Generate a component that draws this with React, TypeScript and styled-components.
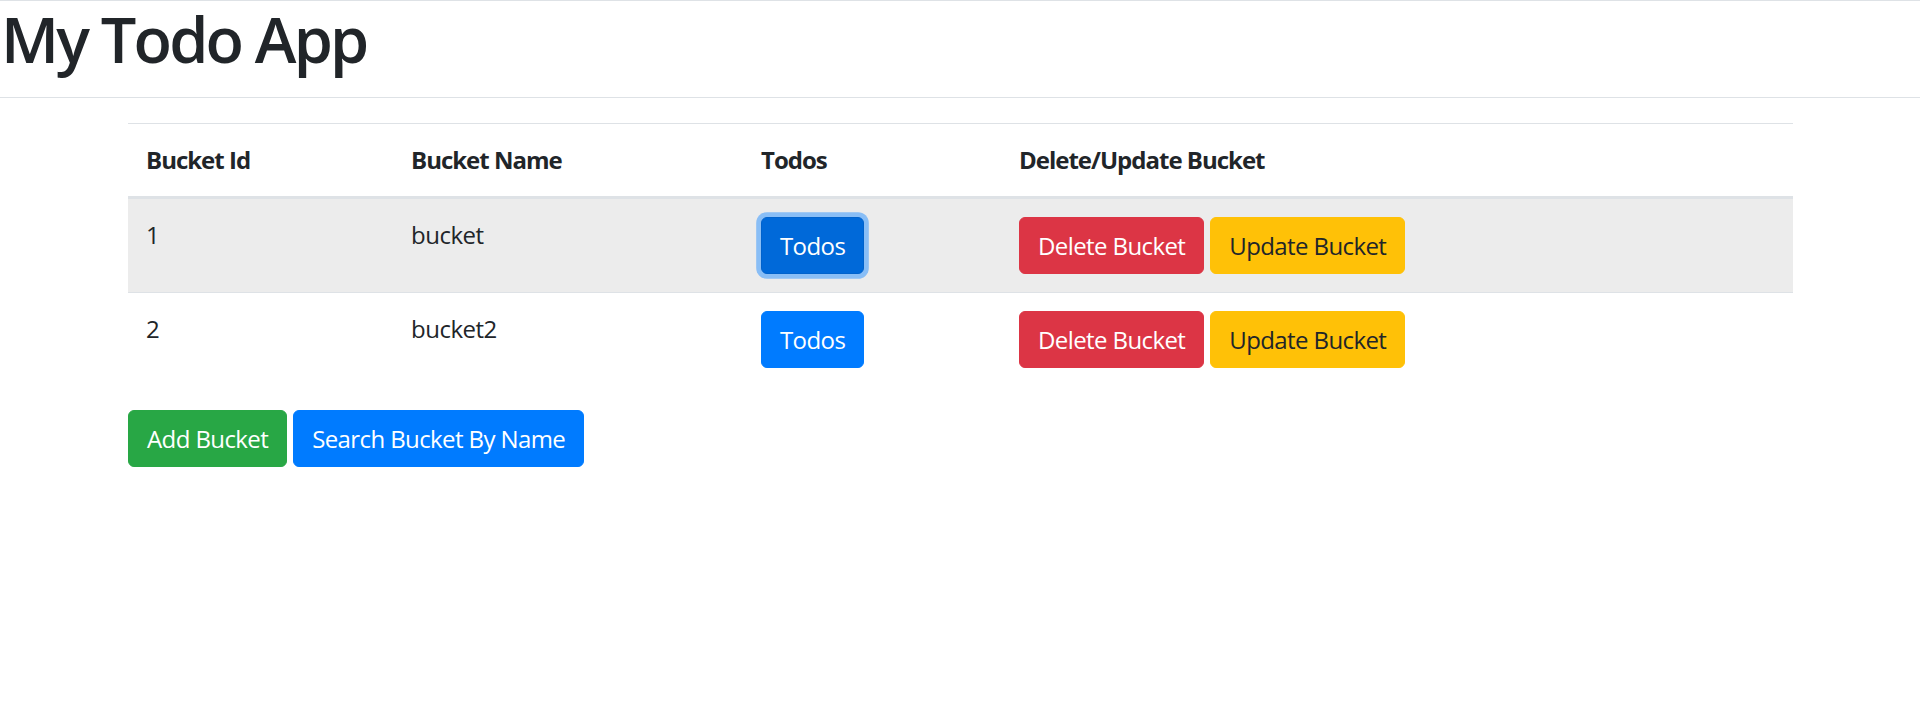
import React from "react";
import styled, { createGlobalStyle, css } from "styled-components";

const GlobalStyle = createGlobalStyle`
  html, body {
    margin: 0;
    padding: 0;
    background: #ffffff;
  }
  body {
    font-family: "Open Sans", "Noto Sans", "Liberation Sans", sans-serif;
    color: #212529;
    font-size: 24px;
    line-height: 36px;
  }
  *, *::before, *::after { box-sizing: border-box; }
`;

const Header = styled.header`
  border-top: 1px solid #dee2e6;
  border-bottom: 1px solid #dee2e6;
  height: 98px;
  padding-left: 1px;
`;

const Title = styled.h1`
  margin: 0;
  font-size: 63px;
  line-height: 76px;
  font-weight: 600;
  letter-spacing: -2.8px;
  color: #212529;
`;

const Main = styled.main`
  padding: 25px 127px 0 128px;
`;

const Table = styled.table`
  width: 100%;
  border-collapse: collapse;
  table-layout: fixed;
  margin-bottom: 24px;
`;

const HeadCell = styled.th`
  text-align: left;
  vertical-align: bottom;
  padding: 18px;
  font-weight: 700;
  letter-spacing: -1px;
  border-top: 1px solid #dee2e6;
  border-bottom: 3px solid #dee2e6;
`;

const Row = styled.tr<{ $hover?: boolean }>`
  background: ${(p) => (p.$hover ? "#ececec" : "transparent")};
`;

const Cell = styled.td`
  padding: 18px;
  vertical-align: top;
  border-top: 1px solid #dee2e6;
  letter-spacing: -0.5px;
`;

const Actions = styled.div`
  display: flex;
  gap: 6px;
`;

type Variant = "primary" | "danger" | "warning" | "success";

const palette: Record<Variant, { bg: string; fg: string }> = {
  primary: { bg: "#007bff", fg: "#ffffff" },
  danger: { bg: "#dc3545", fg: "#ffffff" },
  warning: { bg: "#ffc107", fg: "#212529" },
  success: { bg: "#28a745", fg: "#ffffff" },
};

const Button = styled.button<{ $variant: Variant; $focused?: boolean }>`
  display: inline-block;
  font-family: inherit;
  font-size: 24px;
  line-height: 35px;
  font-weight: 400;
  letter-spacing: -0.6px;
  padding: 10px 18px;
  border-radius: 6px;
  border: 1px solid ${(p) => palette[p.$variant].bg};
  background: ${(p) => palette[p.$variant].bg};
  color: ${(p) => palette[p.$variant].fg};
  cursor: pointer;
  white-space: nowrap;
  ${(p) =>
    p.$focused &&
    css`
      background: #0069d9;
      border-color: #0062cc;
      box-shadow: 0 0 0 4.8px rgba(38, 143, 255, 0.5);
    `}
`;

const Toolbar = styled.div`
  display: flex;
  gap: 6px;
`;

const buckets = [
  { id: 1, name: "bucket" },
  { id: 2, name: "bucket2" },
];

export default function App() {
  return (
    <>
      <GlobalStyle />
      <Header>
        <Title>My Todo App</Title>
      </Header>
      <Main>
        <Table>
          <colgroup>
            <col style={{ width: 265 }} />
            <col style={{ width: 350 }} />
            <col style={{ width: 258 }} />
            <col />
          </colgroup>
          <thead>
            <tr>
              <HeadCell>Bucket Id</HeadCell>
              <HeadCell>Bucket Name</HeadCell>
              <HeadCell>Todos</HeadCell>
              <HeadCell>Delete/Update Bucket</HeadCell>
            </tr>
          </thead>
          <tbody>
            {buckets.map((b, i) => (
              <Row key={b.id} $hover={i === 0}>
                <Cell>{b.id}</Cell>
                <Cell>{b.name}</Cell>
                <Cell>
                  <Button $variant="primary" $focused={i === 0}>
                    Todos
                  </Button>
                </Cell>
                <Cell>
                  <Actions>
                    <Button $variant="danger">Delete Bucket</Button>
                    <Button $variant="warning">Update Bucket</Button>
                  </Actions>
                </Cell>
              </Row>
            ))}
          </tbody>
        </Table>
        <Toolbar>
          <Button $variant="success">Add Bucket</Button>
          <Button $variant="primary">Search Bucket By Name</Button>
        </Toolbar>
      </Main>
    </>
  );
}
